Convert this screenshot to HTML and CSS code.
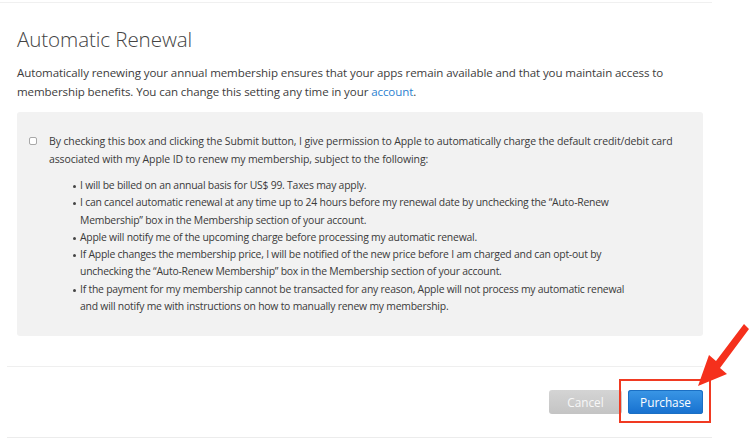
FILE: index.html
```html
<!DOCTYPE html>
<html>
<head>
<meta charset="utf-8">
<link rel="stylesheet" href="styles.css">
</head>
<body>
<div class="page">
  <div class="topline"></div>
  <section class="content">
    <h1 class="title">Automatic Renewal</h1>
    <p class="intro">Automatically renewing your annual membership ensures that your apps remain available and that you maintain access to<br>membership benefits. You can change this setting any time in your <a class="link" href="#">account</a>.</p>
    <div class="terms">
      <div class="agree">
        <span class="check"></span>
        <p class="agree-text">By checking this box and clicking the Submit button, I give permission to Apple to automatically charge the default credit/debit card<br>associated with my Apple ID to renew my membership, subject to the following:</p>
      </div>
      <ul class="list">
        <li>I will be billed on an annual basis for US$ 99. Taxes may apply.</li>
        <li>I can cancel automatic renewal at any time up to 24 hours before my renewal date by unchecking the “Auto-Renew<br>Membership” box in the Membership section of your account.</li>
        <li>Apple will notify me of the upcoming charge before processing my automatic renewal.</li>
        <li>If Apple changes the membership price, I will be notified of the new price before I am charged and can opt-out by<br>unchecking the “Auto-Renew Membership” box in the Membership section of your account.</li>
        <li>If the payment for my membership cannot be transacted for any reason, Apple will not process my automatic renewal<br>and will notify me with instructions on how to manually renew my membership.</li>
      </ul>
    </div>
  </section>
  <div class="actions">
    <button class="btn btn-cancel">Cancel</button>
    <button class="btn btn-primary">Purchase</button>
  </div>
  <div class="bottomline"></div>
</div>
<div class="highlight"></div>
<svg class="arrow" width="60" height="80" viewBox="0 0 60 80">
  <path d="M59 19 L54 14 L26 51 L19 45 L8 76 L37 64 L30 58 Z" fill="#f5301c"/>
</svg>
</body>
</html>
```
FILE: styles.css
```css
html, body {
  margin: 0;
  padding: 0;
  background: #fff;
}
body {
  font-family: "Open Sans", "Noto Sans", sans-serif;
  color: #3a3a3a;
  width: 750px;
  height: 441px;
  overflow: hidden;
  position: relative;
}
.page {
  display: flex;
  flex-direction: column;
}
.topline {
  height: 1px;
  width: 712px;
  margin-top: 2px;
  background: #f0f0f0;
}
.content {
  padding-left: 17px;
  width: 686px;
}
.title {
  font-weight: 300;
  font-size: 20.6px;
  line-height: 28px;
  margin: 22px 0 0;
  color: #444;
  letter-spacing: -0.1px;
}
.intro {
  margin: 10px 0 0;
  font-size: 11.55px;
  line-height: 19px;
  color: #3c3c3c;
  letter-spacing: -0.1px;
  white-space: nowrap;
}
.link {
  color: #2a7fcf;
  text-decoration: none;
}
.terms {
  margin-top: 11px;
  height: 224px;
  box-sizing: border-box;
  background: #f2f2f2;
  border-radius: 3px;
  padding: 20px 12px 0 12px;
}
.agree {
  display: flex;
  align-items: flex-start;
  gap: 12px;
}
.check {
  flex: none;
  width: 6px;
  height: 6px;
  margin-top: 5px;
  border: 1px solid #a8a8a8;
  border-radius: 2px;
  background: #fff;
}
.agree-text {
  margin: 0;
  font-size: 10.5px;
  line-height: 18px;
  letter-spacing: -0.12px;
  white-space: nowrap;
}
.list {
  margin: 9px 0 0;
  padding-left: 51px;
  font-size: 10.4px;
  line-height: 17.3px;
  letter-spacing: -0.22px;
  list-style: none;
  white-space: nowrap;
}
.list li {
  position: relative;
}
.list li::before {
  content: "";
  position: absolute;
  left: -7px;
  top: 8px;
  width: 3px;
  height: 3px;
  border-radius: 50%;
  background: #444;
}
.actions {
  margin-top: 30px;
  margin-left: 7px;
  width: 696px;
  border-top: 1px solid #efefef;
  padding-top: 23px;
  display: flex;
  justify-content: flex-end;
  gap: 6px;
}
.btn {
  height: 24px;
  border: none;
  border-radius: 3px;
  font-family: "Open Sans", "Noto Sans", sans-serif;
  font-size: 11.8px;
  padding: 0;
  color: #fff;
}
.btn-cancel {
  width: 73px;
  background: linear-gradient(#d4d4d4, #c4c4c4);
  color: #f7f7f7;
}
.btn-primary {
  width: 75px;
  background: linear-gradient(#3a97e6, #1670cf);
  box-shadow: inset 0 0 0 1px #1a6fc4;
}
.bottomline {
  margin-top: 23px;
  margin-left: 7px;
  width: 705px;
  height: 1px;
  background: #ececec;
}
.highlight {
  position: absolute;
  left: 619px;
  top: 379px;
  width: 88px;
  height: 40px;
  border: 2px solid #f03a22;
}
.arrow {
  position: absolute;
  left: 690px;
  top: 310px;
}
```
